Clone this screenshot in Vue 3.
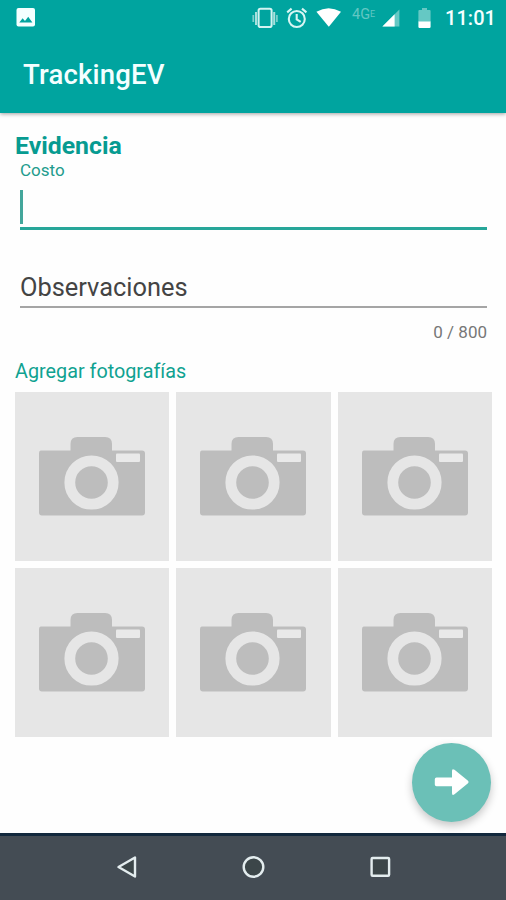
<script setup>
import { ref } from 'vue'

const costo = ref('')
const observaciones = ref('')
const maxLength = 800
const photos = ref([1, 2, 3, 4, 5, 6])
</script>

<template>
  <div class="screen">
    <header class="top">
      <div class="status">
        <svg class="picture" width="20" height="20" viewBox="0 0 20 20">
          <rect x="0.5" y="0" width="18.5" height="18.5" rx="2" fill="#f4ffff" />
          <path d="M3.3 14.500 6.6 10.3 9 13 12.2 8.8 16.4 14.500z" fill="#00a49f" />
        </svg>
        <svg class="vibrate" width="26" height="22" viewBox="0 0 26 22">
          <rect x="6.6" y="1.8" width="13" height="18.2" rx="1.8" fill="none" stroke="#d3f3f1" stroke-width="2" />
          <path d="M4 5v13M22.2 5v13" stroke="#a8e0dd" stroke-width="2" />
          <path d="M1.3 8v7M24.9 8v7" stroke="#7fd0cd" stroke-width="1.7" />
        </svg>
        <svg class="alarm" width="22" height="22" viewBox="0 0 22 22" fill="none" stroke="#d8f5f3" stroke-width="2.1">
          <circle cx="10.8" cy="12" r="8" />
          <path d="M10.7 7v5.4l4 2.5M1.2 5.4 5.6 1.6M16 1.6l4.4 3.8" />
        </svg>
        <svg class="wifi" width="26" height="20" viewBox="0 0 26 20">
          <path d="M0.4 3.800Q12.6-3.4 25 3.800L12.8 18.800z" fill="#fff" />
        </svg>
        <span class="network">4G<small>E</small></span>
        <svg class="signal" width="18" height="18" viewBox="0 0 18 18">
          <path d="M17.4 0.4V17.6H0.4z" fill="#65c8c4" />
          <path d="M12.6 5.2V17.6H0.4z" fill="#fff" />
        </svg>
        <svg class="battery" width="13" height="21" viewBox="0 0 13 21">
          <path d="M4 0h5v2h2.6q1 0 1 1V14H0.4V3q0-1 1-1H4z" fill="#65c8c4" />
          <path d="M0.4 13.500h12.200v5.300q0 1.200-1.200 1.200H1.600q-1.200 0-1.200-1.200z" fill="#fff" />
        </svg>
        <time class="clock">11:01</time>
      </div>
      <h1 class="title">TrackingEV</h1>
    </header>

    <main class="content">
      <h2 class="heading">Evidencia</h2>
      <div class="field cost">
        <label for="costo">Costo</label>
        <div class="entry"><span>{{ costo }}</span><i class="caret"></i></div>
      </div>
      <div class="field notes">
        <div class="placeholder">{{ observaciones || 'Observaciones' }}</div>
        <div class="counter">{{ observaciones.length }} / {{ maxLength }}</div>
      </div>
      <h3 class="subheading">Agregar fotografías</h3>
      <div class="grid">
        <div v-for="photo in photos" :key="photo" class="tile">
          <svg width="108" height="80" viewBox="0 0 108 80">
            <path d="M3 14.500H32.500V8Q32.500 1 39.500 1H67Q74 1 74 8V14.500H104Q107 14.500 107 17.500V76.500Q107 79.500 104 79.500H4Q1 79.500 1 76.500V17.500Q1 14.500 3 14.500z" fill="#bdbdbd" />
            <rect x="78" y="17.500" width="24" height="8.500" rx="1" fill="#e9e9e9" />
            <circle cx="53.500" cy="46.500" r="21.700" fill="none" stroke="#e6e6e6" stroke-width="10.800" />
          </svg>
        </div>
      </div>
      <button class="fab" aria-label="Continuar">
        <svg width="36" height="28" viewBox="0 0 36 28">
          <path d="M2.500 9.500H18V3Q18 0 20.500 1.800L34 12.800Q35.300 14 34 15.200L20.500 26.200Q18 28 18 25V18.300H2.500Q0.800 18.300 0.800 16.600V11.200Q0.800 9.500 2.500 9.500z" fill="#fff" />
        </svg>
      </button>
    </main>

    <nav class="nav">
      <svg width="24" height="24" viewBox="0 0 24 24"><path d="M20 2.500V21.500L3.500 12z" /></svg>
      <svg width="24" height="24" viewBox="0 0 24 24"><circle cx="12.500" cy="12" r="9.800" /></svg>
      <svg width="24" height="24" viewBox="0 0 24 24"><rect x="3.600" y="3" width="17.500" height="17.800" rx="1" /></svg>
    </nav>
  </div>
</template>

<style>
body {
  margin: 0;
  background: #fff;
}
</style>

<style scoped>
.screen {
  display: flex;
  flex-direction: column;
  width: 506px;
  height: 900px;
  overflow: hidden;
  background: #fefefe;
  font-family: Roboto, "Liberation Sans", sans-serif;
}
svg {
  display: block;
  flex: none;
}
h1, h2, h3 {
  margin: 0;
}
.top {
  flex: none;
  height: 113px;
  background: #00a49f;
  color: #f4ffff;
  box-shadow: 0 1px 4px rgba(0, 0, 0, 0.38);
}
.status {
  display: flex;
  align-items: center;
  height: 36px;
  padding-left: 16px;
}
.vibrate { margin-left: 216px; }
.alarm { margin-left: 8px; }
.wifi { margin-left: 8px; }
.network {
  flex: none;
  width: 30px;
  margin-left: 10px;
  color: #62c7c3;
  font-size: 14.5px;
  line-height: 20px;
  margin-top: -8px;
  white-space: nowrap;
}
.network small {
  font-size: 9px;
  vertical-align: 2px;
}
.battery { margin-left: 18px; }
.clock {
  margin-left: 14px;
  font-size: 20px;
  font-weight: 500;
  letter-spacing: 0.05px;
}
.title {
  padding: 22px 0 0 23px;
  font-size: 27.5px;
  line-height: 34px;
  font-weight: 500;
  letter-spacing: 0.2px;
}
.content {
  display: flex;
  flex: none;
  flex-direction: column;
  height: 720px;
  padding: 0 14px 0 15px;
  box-sizing: border-box;
}
.heading {
  margin-top: 17px;
  color: #079b91;
  font-size: 24.8px;
  line-height: 32px;
  font-weight: 700;
}
.field {
  margin: 0 5px;
}
.cost {
  color: #229b8d;
}
.cost label {
  display: block;
  font-size: 17px;
  line-height: 17px;
}
.entry {
  display: flex;
  height: 48px;
  border-bottom: 3px solid #27a699;
}
.caret {
  width: 3px;
  height: 34px;
  margin-top: 11px;
  background: #43a69b;
}
.placeholder {
  margin-top: 42px;
  padding-bottom: 4px;
  border-bottom: 2px solid #a5a5a5;
  color: #444;
  font-size: 25.4px;
  line-height: 30px;
}
.counter {
  margin-top: 13px;
  color: #777;
  font-size: 17px;
  line-height: 22px;
  text-align: right;
}
.subheading {
  margin-top: 16px;
  color: #10a291;
  font-size: 19.8px;
  line-height: 26px;
  font-weight: 400;
}
.grid {
  display: grid;
  grid-template-columns: repeat(3, 1fr);
  grid-auto-rows: 168.5px;
  gap: 7.5px 7px;
  margin-top: 7px;
}
.tile {
  display: flex;
  justify-content: center;
  background: #e6e6e6;
  padding-top: 44px;
  box-sizing: border-box;
}
.fab {
  display: grid;
  place-items: center;
  width: 79px;
  height: 79px;
  margin: 6px 1px 0 auto;
  padding: 0;
  flex: none;
  border: 0;
  border-radius: 50%;
  background: #6bc0b7;
  box-shadow: 0 4px 8px rgba(0, 0, 0, 0.22);
}
.nav {
  display: flex;
  justify-content: center;
  gap: 102.5px;
  height: 67px;
  padding-top: 19px;
  box-sizing: border-box;
  border-top: 3px solid #12283d;
  background: #444c54;
}
.nav svg {
  fill: #3c4649;
  stroke: #e4edef;
  stroke-width: 2.4;
  stroke-linejoin: round;
}
</style>
